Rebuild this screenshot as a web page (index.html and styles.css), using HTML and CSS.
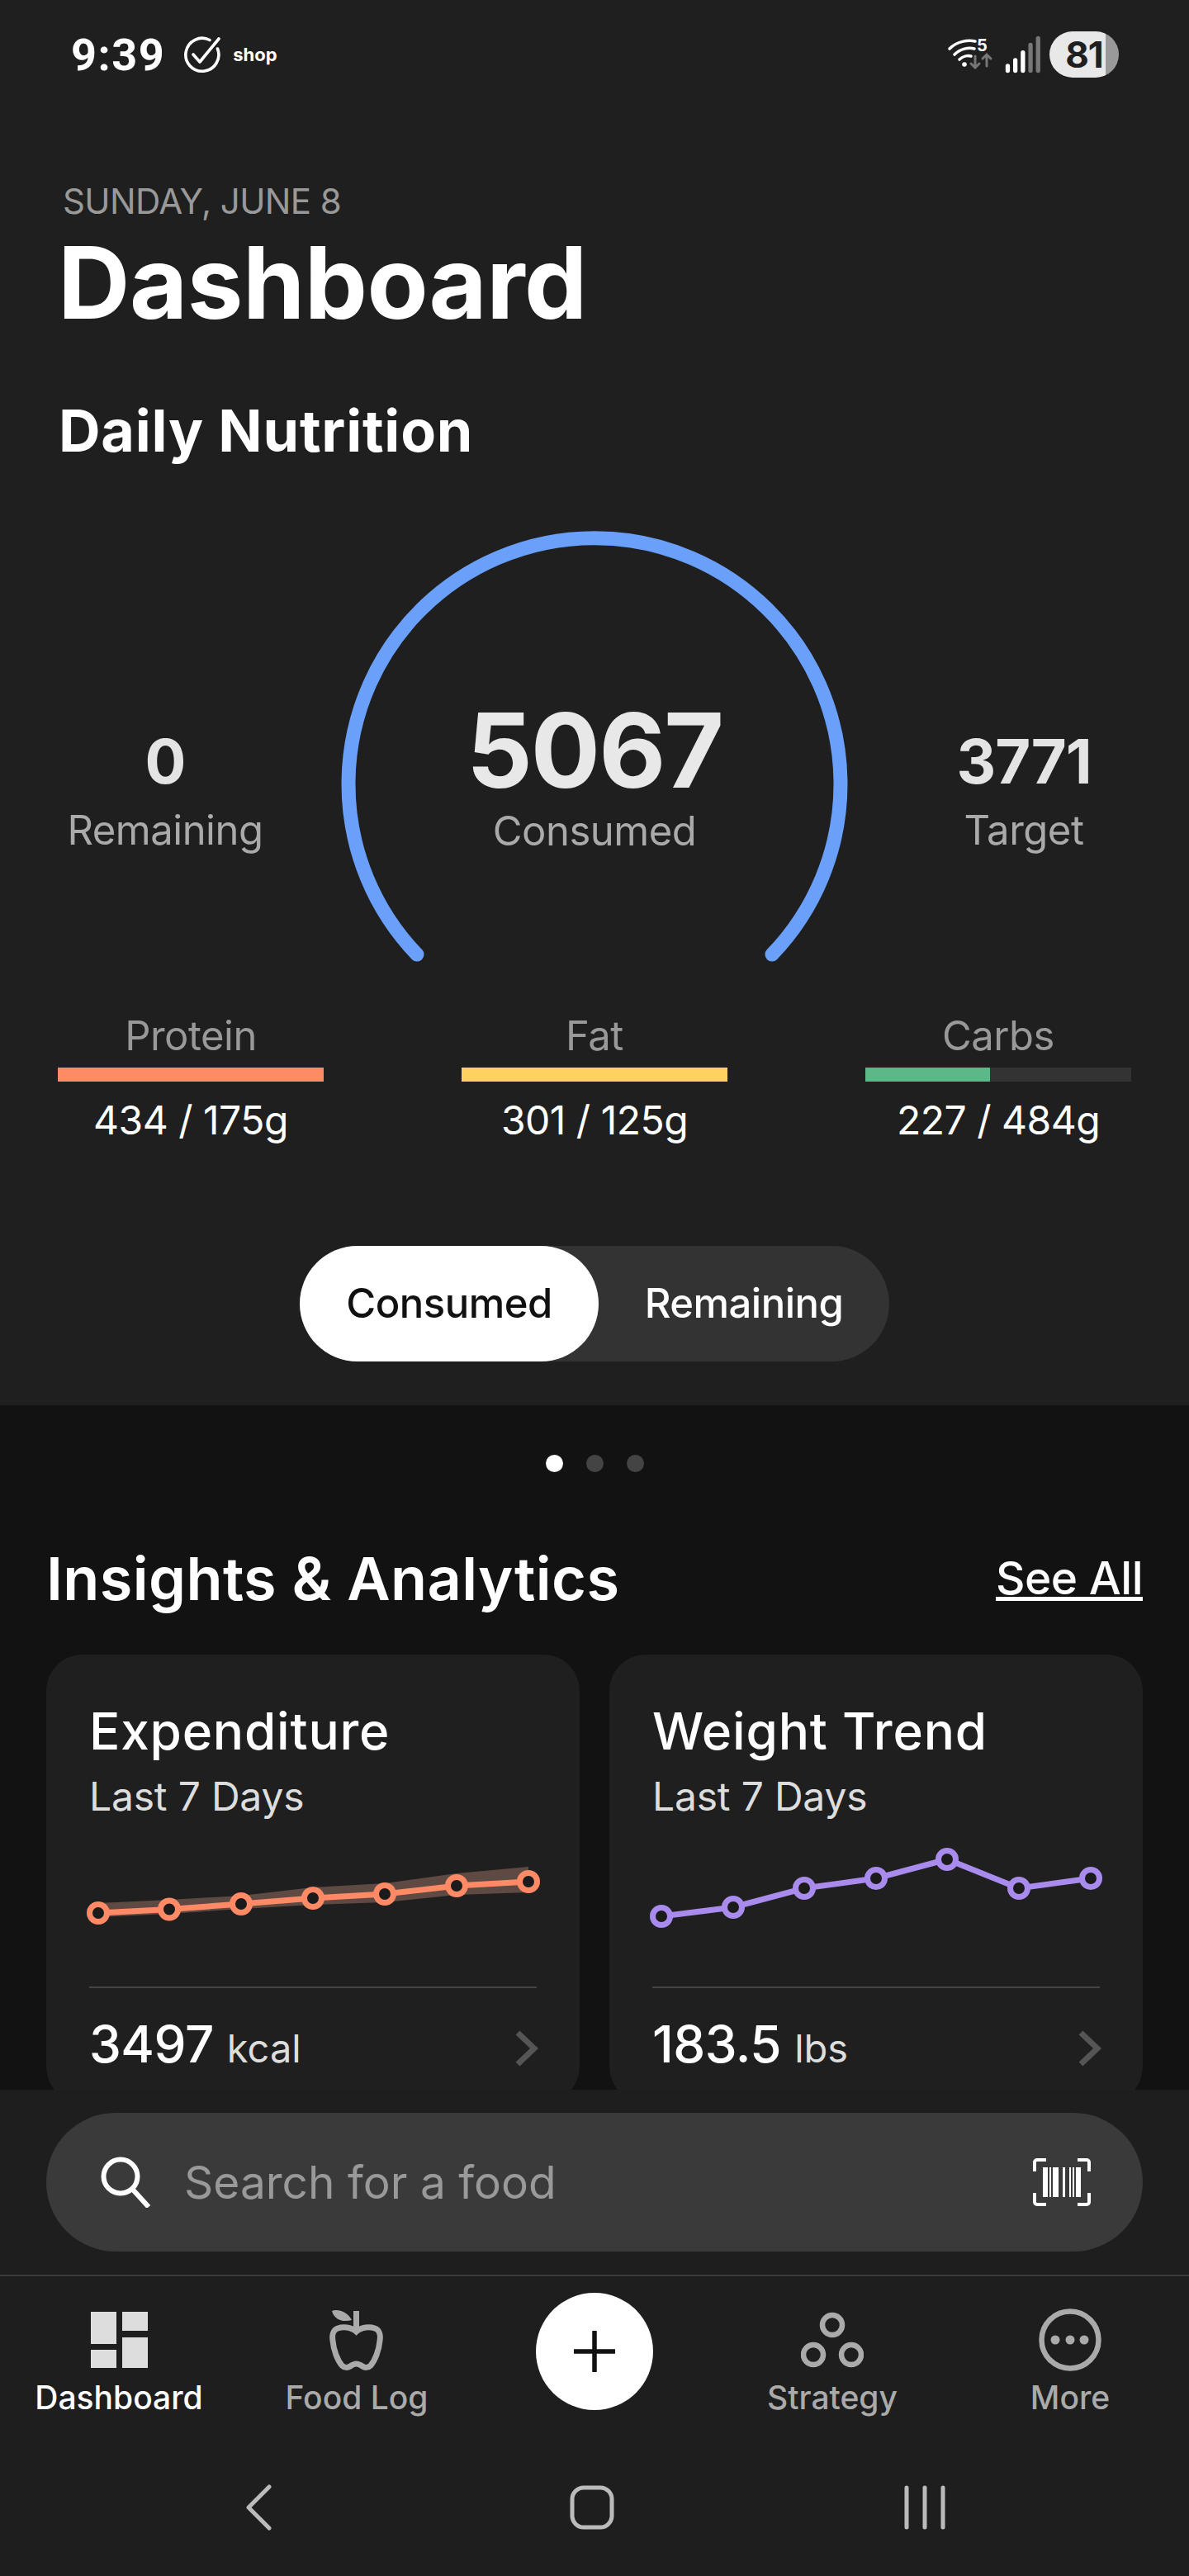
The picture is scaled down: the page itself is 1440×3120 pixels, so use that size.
FILE: index.html
```html
<!DOCTYPE html>
<html lang="en">
<head>
  <meta charset="UTF-8" />
  <meta name="viewport" content="width=device-width, initial-scale=1.0"/>
  <title>Dashboard</title>
  <link rel="stylesheet" href="styles.css">
</head>
<body>
  <div class="app">
    <section class="top">
      <div class="status-bar">
        <div class="status-left">
          <span class="clock">9:39</span>
          <svg class="status-check" viewBox="0 0 46 46" fill="none" stroke="#fff" stroke-width="3.6" stroke-linecap="round" stroke-linejoin="round">
            <path d="M32 5.5A20 20 0 1 0 41.5 16"/>
            <path d="M12 23l8 9L43 4"/>
          </svg>
          <span class="shop">shop</span>
        </div>
        <div class="status-right">
          <svg class="wifi" viewBox="0 0 58 40" fill="none" stroke-linecap="round">
            <path d="M2 13C11 4 24 2 33 4" stroke="#fff" stroke-width="3.6"/>
            <path d="M8 20C15 13 25 11 32 13" stroke="#fff" stroke-width="3.6"/>
            <path d="M14 26C18 22 24 21 28 22" stroke="#fff" stroke-width="3.6"/>
            <circle cx="20" cy="32" r="2.8" fill="#fff"/>
            <path d="M33 22v14m-5-5l5 5 5-5" stroke="#777" stroke-width="3"/>
            <path d="M47 34V20m-5 5l5-5 5 5" stroke="#777" stroke-width="3"/>
            <text x="35" y="16" class="wifi-five">5</text>
          </svg>
          <svg class="signal" viewBox="0 0 40 40" stroke-width="4.6" stroke-linecap="round">
            <path d="M3 37v-5M11 37V26M19 37V18" stroke="#fff"/>
            <path d="M27 37V10M35 37V3" stroke="#777"/>
          </svg>
          <div class="battery"><span>81</span></div>
        </div>
      </div>

      <header class="page-head">
        <div class="date">SUNDAY, JUNE 8</div>
        <h1>Dashboard</h1>
        <h2>Daily Nutrition</h2>
      </header>

      <div class="gauge-row">
        <div class="stat">
          <div class="stat-num">0</div>
          <div class="stat-label">Remaining</div>
        </div>
        <div class="gauge">
          <svg viewBox="0 0 640 540" width="640" height="540" fill="none">
            <path d="M105 526A298 298 0 1 1 535 526" stroke="#6a9ffa" stroke-width="17" stroke-linecap="round"/>
          </svg>
          <div class="gauge-text">
            <div class="gauge-num">5067</div>
            <div class="stat-label">Consumed</div>
          </div>
        </div>
        <div class="stat">
          <div class="stat-num">3771</div>
          <div class="stat-label">Target</div>
        </div>
      </div>

      <div class="macros">
        <div class="macro">
          <div class="macro-name">Protein</div>
          <div class="bar"><div class="bar-fill protein" style="width:100%"></div></div>
          <div class="macro-val">434 / 175g</div>
        </div>
        <div class="macro">
          <div class="macro-name">Fat</div>
          <div class="bar"><div class="bar-fill fat" style="width:100%"></div></div>
          <div class="macro-val">301 / 125g</div>
        </div>
        <div class="macro">
          <div class="macro-name">Carbs</div>
          <div class="bar"><div class="bar-fill carbs" style="width:47%"></div></div>
          <div class="macro-val">227 / 484g</div>
        </div>
      </div>

      <div class="toggle">
        <div class="toggle-opt active">Consumed</div>
        <div class="toggle-opt">Remaining</div>
      </div>
    </section>

    <section class="lower">
      <div class="dots">
        <span class="dot on"></span>
        <span class="dot"></span>
        <span class="dot"></span>
      </div>
      <div class="insights-head">
        <h3>Insights &amp; Analytics</h3>
        <a href="#" class="see-all">See All</a>
      </div>
      <div class="cards">
        <div class="card">
          <div class="card-title">Expenditure</div>
          <div class="card-sub">Last 7 Days</div>
          <svg class="chart" viewBox="0 0 646 110" fill="none">
            <polygon points="63,75 149,71 236,66 323,56 410,51 497,39 584,31 584,62 497,65 410,74 323,77 236,82 149,88 63,92" fill="#5f4a43"/>
            <polyline points="63,87 149,82.5 236,76 323,69 410,64 497,54 584,49" stroke="#ff8a65" stroke-width="7"/>
            <g fill="#1b1b1b" stroke="#ff8a65" stroke-width="7">
              <circle cx="63" cy="87" r="10.5"/>
              <circle cx="149" cy="82.5" r="10.5"/>
              <circle cx="236" cy="76" r="10.5"/>
              <circle cx="323" cy="69" r="10.5"/>
              <circle cx="410" cy="64" r="10.5"/>
              <circle cx="497" cy="54" r="10.5"/>
              <circle cx="584" cy="49" r="10.5"/>
            </g>
          </svg>
          <div class="card-foot">
            <div><span class="foot-num">3497</span><span class="foot-unit">kcal</span></div>
            <svg class="chevron" viewBox="0 0 28 44" fill="none" stroke="#555" stroke-width="7"><path d="M3 3l20 19L3 41"/></svg>
          </div>
        </div>
        <div class="card">
          <div class="card-title">Weight Trend</div>
          <div class="card-sub">Last 7 Days</div>
          <svg class="chart" viewBox="0 0 646 110" fill="none">
            <polyline points="63,91 150,80 236,57 323,45 409,22 496,57 583,45" stroke="#a98bed" stroke-width="7"/>
            <g fill="#1b1b1b" stroke="#a98bed" stroke-width="7">
              <circle cx="63" cy="91" r="10.5"/>
              <circle cx="150" cy="80" r="10.5"/>
              <circle cx="236" cy="57" r="10.5"/>
              <circle cx="323" cy="45" r="10.5"/>
              <circle cx="409" cy="22" r="10.5"/>
              <circle cx="496" cy="57" r="10.5"/>
              <circle cx="583" cy="45" r="10.5"/>
            </g>
          </svg>
          <div class="card-foot">
            <div><span class="foot-num">183.5</span><span class="foot-unit">lbs</span></div>
            <svg class="chevron" viewBox="0 0 28 44" fill="none" stroke="#555" stroke-width="7"><path d="M3 3l20 19L3 41"/></svg>
          </div>
        </div>
      </div>
    </section>

    <section class="bottom">
      <div class="search">
        <svg class="search-icon" viewBox="0 0 62 62" fill="none" stroke="#fff" stroke-width="6">
          <circle cx="24" cy="24" r="20.5"/>
          <path d="M38 39l20 22"/>
        </svg>
        <span class="search-text">Search for a food</span>
        <svg class="barcode" viewBox="0 0 70 58">
          <path d="M16 2H5a3 3 0 0 0-3 3v11M54 2h11a3 3 0 0 1 3 3v11M16 56H5a3 3 0 0 1-3-3V42M54 56h11a3 3 0 0 0 3-3V42" fill="none" stroke="#fff" stroke-width="4"/>
          <g fill="#fff">
            <rect x="12" y="11" width="6" height="36"/>
            <rect x="20" y="11" width="2" height="36"/>
            <rect x="24" y="11" width="7" height="36"/>
            <rect x="36" y="11" width="3" height="36"/>
            <rect x="44" y="11" width="2" height="36"/>
            <rect x="48" y="11" width="2" height="36"/>
            <rect x="52" y="11" width="6" height="36"/>
          </g>
        </svg>
      </div>

      <nav class="tabs">
        <a class="tab active">
          <div class="tab-icon">
            <svg width="69" height="68" viewBox="0 0 69 68" fill="#ddd">
              <rect x="0" y="0" width="31" height="39"/>
              <rect x="38" y="0" width="31" height="23"/>
              <rect x="0" y="46" width="31" height="22"/>
              <rect x="38" y="31" width="31" height="37"/>
            </svg>
          </div>
          <span>Dashboard</span>
        </a>
        <a class="tab">
          <div class="tab-icon">
            <svg width="66" height="74" viewBox="0 0 66 74" fill="none">
              <path d="M32.5 27C26 21 16 21 10 23C4 25 3 32 4 38C5 50 10 62 15 68C18 71 22 71 25 69C28 67 30 66 32.5 66C35 66 37 67 40 69C43 71 47 71 50 68C55 62 60 50 61 38C62 32 61 25 55 23C49 21 39 21 32.5 27Z" stroke="#aaa" stroke-width="7"/>
              <path d="M32.5 2v24" stroke="#aaa" stroke-width="7"/>
              <path d="M3 2C10 -1 22 3 27 13C17 16 6 13 3 2Z" fill="#aaa"/>
            </svg>
          </div>
          <span>Food Log</span>
        </a>
        <div class="tab-add">
          <svg width="54" height="54" viewBox="0 0 54 54" stroke="#111" stroke-width="5.5"><path d="M27 2v50M2 27h50"/></svg>
        </div>
        <a class="tab">
          <div class="tab-icon">
            <svg width="76" height="70" viewBox="0 0 76 70" fill="none" stroke="#aaa" stroke-width="6.5">
              <circle cx="38" cy="17" r="12"/>
              <circle cx="15" cy="53" r="12"/>
              <circle cx="61" cy="53" r="12"/>
            </svg>
          </div>
          <span>Strategy</span>
        </a>
        <a class="tab">
          <div class="tab-icon">
            <svg width="76" height="76" viewBox="0 0 76 76" fill="#aaa">
              <circle cx="38" cy="38" r="34.5" fill="none" stroke="#aaa" stroke-width="6.5"/>
              <circle cx="20" cy="38" r="5.5"/>
              <circle cx="38" cy="38" r="5.5"/>
              <circle cx="55" cy="38" r="5.5"/>
            </svg>
          </div>
          <span>More</span>
        </a>
      </nav>

      <div class="sys-keys">
        <svg width="31" height="56" viewBox="0 0 31 56" fill="none" stroke="#bbb" stroke-width="5" stroke-linecap="round" stroke-linejoin="round"><path d="M28 3L3 28l25 25"/></svg>
        <svg width="54" height="54" viewBox="0 0 54 54" fill="none" stroke="#bbb" stroke-width="5"><rect x="3" y="3" width="48" height="48" rx="14"/></svg>
        <svg width="50" height="54" viewBox="0 0 50 54" fill="none" stroke="#bbb" stroke-width="5" stroke-linecap="round"><path d="M3 3v48M25 3v48M47 3v48"/></svg>
      </div>
    </section>
  </div>
</body>
</html>
```
FILE: styles.css
```css
* {
  margin: 0;
  padding: 0;
  box-sizing: border-box;
}

body {
  font-family: Inter, 'Noto Sans', sans-serif;
  background: #1f1f1f;
  color: #fff;
}

.app {
  width: 1440px;
  height: 3120px;
  display: flex;
  flex-direction: column;
  overflow: hidden;
}

/* Top panel */
.top {
  height: 1702px;
  background: #1f1f1f;
}

.status-bar {
  height: 132px;
  padding: 0 85px 0 86px;
  display: flex;
  justify-content: space-between;
  align-items: center;
}

.status-left,
.status-right {
  display: flex;
  align-items: center;
}

.clock {
  font-family: Roboto, sans-serif;
  font-size: 54px;
  font-weight: 700;
  letter-spacing: 1.5px;
}

.status-check {
  width: 46px;
  height: 46px;
  margin-left: 22px;
}

.shop {
  margin-left: 14px;
  font-size: 22px;
  font-weight: 700;
}

.wifi {
  width: 58px;
  height: 40px;
  overflow: visible;
}

.wifi-five {
  font-family: Inter, sans-serif;
  font-size: 20px;
  font-weight: 700;
  fill: #fff;
}

.signal {
  width: 56px;
  height: 46px;
  margin-left: 6px;
}

.battery {
  width: 84px;
  height: 56px;
  margin-left: 3px;
  border-radius: 28px;
  background: linear-gradient(to right, #e8e8e8 81%, #999 81%);
  color: #1f1f1f;
  font-size: 44px;
  font-weight: 700;
  letter-spacing: -1px;
  text-align: center;
  line-height: 56px;
}

.page-head {
  padding: 87px 0 0 76px;
}

.date {
  height: 50px;
  line-height: 50px;
  font-size: 42px;
  color: #999;
  letter-spacing: -0.6px;
}

h1 {
  height: 140px;
  margin: 3px 0 0 -6px;
  line-height: 140px;
  font-size: 121px;
  font-weight: 700;
  letter-spacing: -0.5px;
}

h2 {
  height: 80px;
  margin: 70px 0 0 -5px;
  line-height: 80px;
  font-size: 70px;
  font-weight: 700;
  letter-spacing: 0.8px;
}

.gauge-row {
  margin-top: 68px;
  display: grid;
  grid-template-columns: 400px 640px 400px;
}

.stat {
  padding-top: 242px;
  text-align: center;
}

.stat-num {
  height: 100px;
  line-height: 100px;
  font-size: 74px;
  font-weight: 700;
  color: #e4e4e4;
  letter-spacing: -1px;
}

.stat-label {
  height: 60px;
  margin-top: 4px;
  line-height: 60px;
  font-size: 49px;
  color: #aaa;
  letter-spacing: -0.5px;
}

.gauge {
  position: relative;
  height: 540px;
}

.gauge svg {
  display: block;
}

.gauge-text {
  position: absolute;
  top: 215px;
  left: 0;
  right: 0;
  text-align: center;
}

.gauge-num {
  height: 128px;
  line-height: 128px;
  font-size: 125px;
  font-weight: 700;
  color: #e8e8e8;
  letter-spacing: -2px;
}

.macros {
  margin-top: 60px;
  padding: 0 70px;
  display: grid;
  grid-template-columns: repeat(3, 322px);
  column-gap: 167px;
}

.macro {
  text-align: center;
}

.macro-name {
  height: 50px;
  line-height: 50px;
  font-size: 49px;
  color: #999;
  letter-spacing: -0.5px;
}

.bar {
  height: 17px;
  margin-top: 13px;
  background: #333;
}

.bar-fill {
  height: 100%;
}

.protein { background: #ff8a65; }
.fat { background: #ffd25f; }
.carbs { background: #5cb887; }

.macro-val {
  height: 50px;
  margin-top: 22px;
  line-height: 50px;
  font-size: 48px;
  letter-spacing: -0.5px;
}

.toggle {
  width: 714px;
  height: 140px;
  margin: 127px 0 0 363px;
  border-radius: 70px;
  background: #333;
  display: flex;
  align-items: center;
}

.toggle-opt {
  height: 140px;
  line-height: 140px;
  font-size: 49px;
  font-weight: 500;
  letter-spacing: -0.5px;
  text-align: center;
  border-radius: 70px;
}

.toggle-opt.active {
  width: 362px;
  background: #fff;
  color: #111;
}

.toggle-opt:last-child {
  width: 352px;
}

/* Insights */
.lower {
  height: 829px;
  background: #121212;
  overflow: hidden;
}

.dots {
  padding-top: 60px;
  height: 81px;
  display: flex;
  justify-content: center;
  gap: 28px;
}

.dot {
  width: 21px;
  height: 21px;
  border-radius: 50%;
  background: #444;
}

.dot.on {
  background: #fff;
}

.insights-head {
  height: 80px;
  margin-top: 88px;
  padding: 0 56px;
  display: flex;
  justify-content: space-between;
  align-items: center;
}

h3 {
  font-size: 72px;
  font-weight: 600;
  letter-spacing: 0.4px;
}

.see-all {
  font-size: 55px;
  font-weight: 500;
  color: #fff;
  letter-spacing: -0.5px;
}

.cards {
  margin-top: 53px;
  padding: 0 56px;
  display: grid;
  grid-template-columns: 646px 646px;
  column-gap: 36px;
}

.card {
  height: 543px;
  padding: 58px 52px 0;
  background: #1f1f1f;
  border-radius: 44px;
}

.card-title {
  height: 70px;
  line-height: 70px;
  font-size: 62px;
  font-weight: 500;
  letter-spacing: 0.8px;
}

.card-sub {
  height: 60px;
  margin-top: 14px;
  line-height: 60px;
  font-size: 48px;
  color: #ddd;
  letter-spacing: -0.2px;
}

.chart {
  display: block;
  width: 646px;
  height: 110px;
  margin: 24px 0 0 -52px;
}

.card-foot {
  margin-top: 66px;
  padding-top: 33px;
  border-top: 2px solid #444;
  display: flex;
  justify-content: space-between;
  align-items: center;
}

.card-foot > div {
  line-height: 70px;
}

.foot-num {
  font-size: 62px;
  font-weight: 500;
  letter-spacing: -0.5px;
}

.foot-unit {
  margin-left: 16px;
  font-size: 47px;
  color: #ddd;
}

.chevron {
  width: 28px;
  height: 44px;
  margin: -6px -2px 0 0;
}

/* Bottom bar */
.bottom {
  flex: 1;
  background: #1e1e1e;
  padding-top: 28px;
}

.search {
  height: 168px;
  margin: 0 56px;
  padding: 0 63px 0 66px;
  border-radius: 84px;
  background: #3a3a3a;
  display: flex;
  align-items: center;
}

.search-icon {
  width: 62px;
  height: 62px;
}

.search-text {
  margin-left: 39px;
  flex: 1;
  font-size: 55px;
  color: #999;
}

.barcode {
  width: 70px;
  height: 58px;
}

.tabs {
  margin-top: 28px;
  padding-top: 20px;
  border-top: 2px solid #3c3c3c;
  display: grid;
  grid-template-columns: repeat(5, 288px);
}

.tab {
  padding-top: 20px;
  display: flex;
  flex-direction: column;
  align-items: center;
  color: #aaa;
  font-size: 39px;
  font-weight: 500;
}

.tab.active {
  color: #fff;
}

.tab-icon {
  height: 74px;
  display: flex;
  align-items: center;
  justify-content: center;
}

.tab span {
  height: 46px;
  margin-top: 10px;
  line-height: 46px;
}

.tab-add {
  width: 142px;
  height: 142px;
  justify-self: center;
  border-radius: 50%;
  background: #fff;
  display: flex;
  align-items: center;
  justify-content: center;
}

.sys-keys {
  margin-top: 82px;
  padding-left: 112px;
  display: grid;
  grid-template-columns: repeat(3, 403px);
  justify-items: center;
  align-items: center;
}

.sys-keys svg {
  display: block;
}
```
